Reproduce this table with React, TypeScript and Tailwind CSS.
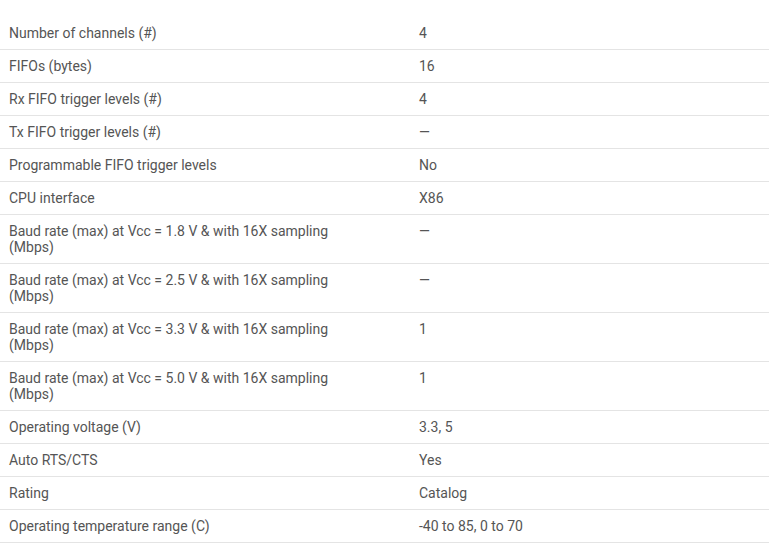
const rows: [string, string][] = [
  ["Number of channels (#)", "4"],
  ["FIFOs (bytes)", "16"],
  ["Rx FIFO trigger levels (#)", "4"],
  ["Tx FIFO trigger levels (#)", "—"],
  ["Programmable FIFO trigger levels", "No"],
  ["CPU interface", "X86"],
  ["Baud rate (max) at Vcc = 1.8 V & with 16X sampling (Mbps)", "—"],
  ["Baud rate (max) at Vcc = 2.5 V & with 16X sampling (Mbps)", "—"],
  ["Baud rate (max) at Vcc = 3.3 V & with 16X sampling (Mbps)", "1"],
  ["Baud rate (max) at Vcc = 5.0 V & with 16X sampling (Mbps)", "1"],
  ["Operating voltage (V)", "3.3, 5"],
  ["Auto RTS/CTS", "Yes"],
  ["Rating", "Catalog"],
  ["Operating temperature range (C)", "-40 to 85, 0 to 70"],
];

// Parametrics table
export default function App() {
  return (
    <div className="min-h-screen bg-white pt-[17px] font-['Roboto',sans-serif] text-[14px] leading-4 text-[#555]">
      <table className="w-full border-collapse">
        <tbody>
          {rows.map(([label, value]) => (
            <tr key={label} className="border-b border-[#e4e4e4] align-top">
              <td className="w-[410px] py-2 pl-[9px]">
                <div className="w-[350px]">{label}</div>
              </td>
              <td className="py-2 pl-[9px]">{value}</td>
            </tr>
          ))}
        </tbody>
      </table>
    </div>
  );
}
